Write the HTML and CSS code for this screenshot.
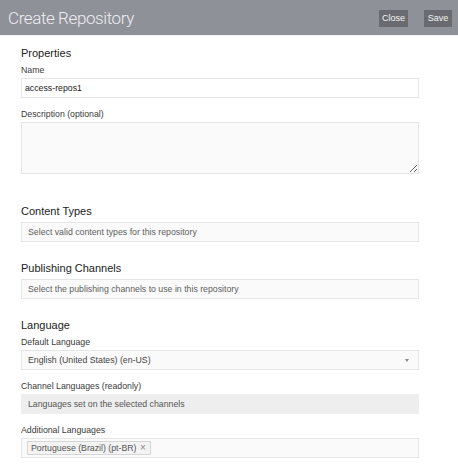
FILE: index.html
```html
<!DOCTYPE html>
<html>
<head>
<meta charset="utf-8">
<link rel="stylesheet" href="styles.css">
</head>
<body>
<header class="bar">
  <div class="title">Create Repository</div>
  <div class="actions">
    <button class="btn">Close</button>
    <button class="btn">Save</button>
  </div>
</header>
<main class="content">
  <section class="sec sec-props">
    <h2 class="head">Properties</h2>
    <div class="field">
      <label class="lbl">Name</label>
      <div class="inp inp-white">access-repos1</div>
    </div>
    <div class="field field-desc">
      <label class="lbl">Description (optional)</label>
      <textarea class="area"></textarea>
    </div>
  </section>
  <section class="sec sec-content">
    <h2 class="head">Content Types</h2>
    <div class="inp inp-sel ph">Select valid content types for this repository</div>
  </section>
  <section class="sec">
    <h2 class="head">Publishing Channels</h2>
    <div class="inp inp-sel ph">Select the publishing channels to use in this repository</div>
  </section>
  <section class="sec">
    <h2 class="head">Language</h2>
    <div class="field">
      <label class="lbl">Default Language</label>
      <div class="inp inp-sel inp-drop"><span>English (United States) (en-US)</span><span class="caret"></span></div>
    </div>
    <div class="field">
      <label class="lbl">Channel Languages (readonly)</label>
      <div class="inp inp-sel inp-ro">Languages set on the selected channels</div>
    </div>
    <div class="field">
      <label class="lbl">Additional Languages</label>
      <div class="inp inp-tags"><span class="tag">Portuguese (Brazil) (pt-BR) <span class="x">×</span></span></div>
    </div>
  </section>
</main>
</body>
</html>
```

FILE: styles.css
```css
html, body {
  margin: 0;
  padding: 0;
  background: #ffffff;
}
body {
  font-family: "Liberation Sans", Arial, sans-serif;
  color: #333333;
  width: 458px;
  height: 468px;
  overflow: hidden;
}
.bar {
  height: 36px;
  background: #8f9199;
  display: flex;
  align-items: center;
  justify-content: space-between;
  padding: 0 6px 0 8px;
  border-bottom: 1px solid #f2f2f4;
  box-sizing: border-box;
}
.title {
  font-family: Roboto, "Liberation Sans", sans-serif;
  font-weight: 300;
  font-size: 17px;
  letter-spacing: -0.4px;
  color: #eeeef0;
  margin-top: 1px;
}
.actions {
  display: flex;
  gap: 16px;
  align-items: center;
  margin-top: 1px;
}
.btn {
  font-family: "Liberation Sans", Arial, sans-serif;
  font-size: 9px;
  color: #f4f4f4;
  background: #6a6b70;
  border: none;
  height: 17px;
  padding: 0 3px;
  min-width: 28px;
  margin: 0;
}
.content {
  padding: 10px 0 0 21px;
  width: 398px;
}
.sec {
  margin-bottom: 19px;
}
.sec-props {
  margin-bottom: 0;
}
.head {
  font-size: 11px;
  line-height: 14px;
  font-weight: normal;
  color: #222222;
  margin: 0 0 4px 0;
}
.field {
  margin-bottom: 10px;
}
.field:last-child {
  margin-bottom: 0;
}
.sec-props .field-desc {
  margin-bottom: 30px;
}
.lbl {
  display: block;
  font-size: 8.75px;
  line-height: 12px;
  color: #3a3a3a;
  margin-bottom: 2px;
}
.inp {
  box-sizing: border-box;
  height: 20px;
  border: 1px solid #e4e5e5;
  font-size: 8.75px;
  line-height: 18px;
  padding: 0 6px;
  color: #333333;
  background: #fafafa;
  white-space: nowrap;
  overflow: hidden;
}
.inp-white {
  background: #ffffff;
  padding: 0 3px;
  color: #222222;
}
.ph {
  color: #5e5e5e;
}
.inp-drop {
  display: flex;
  align-items: center;
  justify-content: space-between;
  color: #444444;
}
.caret {
  width: 0;
  height: 0;
  border-left: 2.5px solid transparent;
  border-right: 2.5px solid transparent;
  border-top: 3px solid #8a8a8a;
  margin-right: 3px;
}
.inp-ro {
  background: #eeeeee;
  border-color: #eeeeee;
  color: #555555;
}
.inp-tags {
  display: flex;
  align-items: center;
  padding: 0 5px;
}
.tag {
  box-sizing: border-box;
  height: 14px;
  line-height: 12px;
  border: 1px solid #d6d6d6;
  background: #f3f3f3;
  padding: 0 4px 0 3px;
  color: #555555;
  font-size: 8.75px;
}
.x {
  color: #888888;
  font-size: 10px;
  margin-left: 1px;
}
.area {
  display: block;
  box-sizing: border-box;
  width: 398px;
  height: 52px;
  margin: 0;
  border: 1px solid #e4e5e5;
  background: #fafafa;
  resize: vertical;
  font-family: "Liberation Sans", Arial, sans-serif;
  font-size: 9px;
  padding: 3px;
  outline: none;
}
```
